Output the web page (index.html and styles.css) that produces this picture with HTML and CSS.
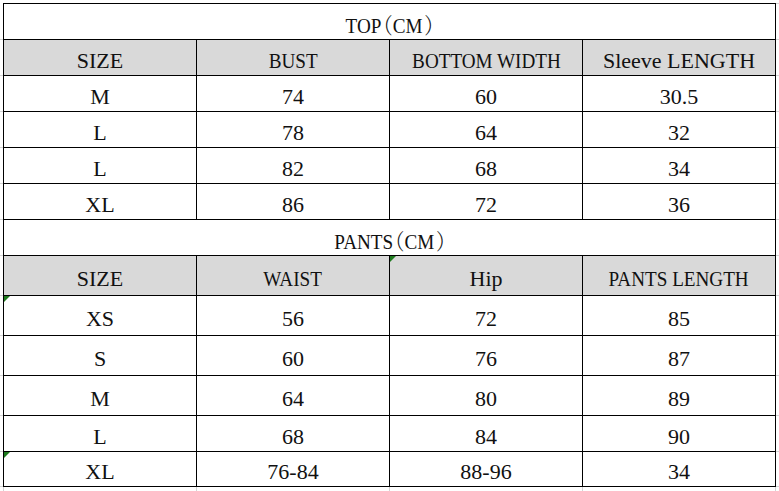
FILE: index.html
```html
<!DOCTYPE html>
<html lang="en">
<head>
<meta charset="utf-8">
<title>Size Chart</title>
<link rel="stylesheet" href="styles.css">
</head>
<body>
<div class="sheet">
  <div class="grid">
    <div class="cell title last"><span class="cond">TOP<span class="paren">（</span>CM<span class="paren">）</span></span></div>

    <div class="cell head first">SIZE</div>
    <div class="cell head"><span class="cond">BUST</span></div>
    <div class="cell head"><span class="cond">BOTTOM WIDTH</span></div>
    <div class="cell head last">Sleeve LENGTH</div>

    <div class="cell first">M</div><div class="cell">74</div><div class="cell">60</div><div class="cell last">30.5</div>
    <div class="cell first">L</div><div class="cell">78</div><div class="cell">64</div><div class="cell last">32</div>
    <div class="cell first">L</div><div class="cell">82</div><div class="cell">68</div><div class="cell last">34</div>
    <div class="cell first">XL</div><div class="cell">86</div><div class="cell">72</div><div class="cell last">36</div>

    <div class="cell title first last"><span class="cond">PANTS<span class="paren">（</span>CM<span class="paren">）</span></span></div>

    <div class="cell head first">SIZE</div>
    <div class="cell head"><span class="cond">WAIST</span></div>
    <div class="cell head"><span class="flag"></span>Hip</div>
    <div class="cell head last"><span class="cond">PANTS LENGTH</span></div>

    <div class="cell first"><span class="flag"></span>XS</div><div class="cell">56</div><div class="cell">72</div><div class="cell last">85</div>
    <div class="cell first">S</div><div class="cell">60</div><div class="cell">76</div><div class="cell last">87</div>
    <div class="cell first">M</div><div class="cell">64</div><div class="cell">80</div><div class="cell last">89</div>
    <div class="cell first">L</div><div class="cell">68</div><div class="cell">84</div><div class="cell last">90</div>
    <div class="cell first"><span class="flag"></span>XL</div><div class="cell">76-84</div><div class="cell">88-96</div><div class="cell last">34</div>
  </div>
  <div class="foot"></div>
</div>
</body>
</html>
```
FILE: styles.css
```css
html, body {
  margin: 0;
  padding: 0;
  background: #ffffff;
}

body {
  padding: 3px 0 0 3px;
  color: #111;
}

.sheet {
  width: 773px;
}

.grid {
  display: grid;
  grid-template-columns: repeat(4, 192px);
  grid-template-rows: 35px 35px 35px 35px 35px 35px 35px 39px 39px 39px 39px 35px 34px;
  gap: 1px;
  padding: 1px;
  background: #000;
}

.cell {
  position: relative;
  background: #fff;
  display: flex;
  align-items: center;
  justify-content: center;
  padding-top: 6px;
  box-sizing: border-box;
  white-space: nowrap;
  line-height: 1;
  font-family: "Liberation Serif", serif;
  font-size: 22px;
}

.title {
  grid-column: 1 / 5;
  padding-top: 6px;
}

.paren {
  font-family: "Noto Serif CJK SC", "Noto Sans CJK SC", serif;
  font-weight: 300;
  font-feature-settings: "halt";
  margin-left: 2px;
}

.cond {
  display: inline-block;
  transform: scaleX(0.87);
}

.head {
  background: #d9d9d9;
}

/* faint spreadsheet gridlines that peek out beyond the table */
.first::before {
  content: "";
  position: absolute;
  left: -4px;
  top: -1px;
  width: 3px;
  height: 1px;
  background: #d4d4d4;
}

.last::after {
  content: "";
  position: absolute;
  right: -4px;
  top: -1px;
  width: 3px;
  height: 1px;
  background: #d4d4d4;
}

.foot {
  position: relative;
  height: 4px;
  width: 773px;
  background: repeating-linear-gradient(to right, #d4d4d4 0 1px, transparent 1px 193px);
}

.foot::before,
.foot::after {
  content: "";
  position: absolute;
  top: -1px;
  width: 3px;
  height: 1px;
  background: #d4d4d4;
}

.foot::before { left: -3px; }
.foot::after { right: -3px; }

/* spreadsheet error-indicator corner */
.flag {
  position: absolute;
  left: 0;
  top: 0;
  width: 0;
  height: 0;
  border-top: 6px solid #1e7b1e;
  border-right: 6px solid transparent;
}
```
